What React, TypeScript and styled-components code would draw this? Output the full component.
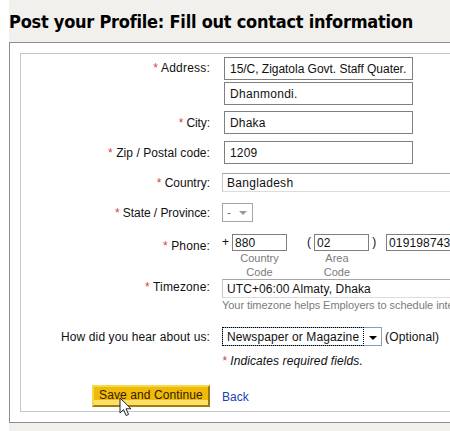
import React from "react";
import styled, { createGlobalStyle } from "styled-components";

const GlobalStyle = createGlobalStyle`
  * { box-sizing: border-box; }
  html, body { margin: 0; padding: 0; height: 100%; overflow: hidden; background: #fff; }
  body { font: 12px/16px "Liberation Sans", Arial, sans-serif; color: #111; }
`;

const Page = styled.main`
  width: 441px;
  height: 431px;
  margin-left: 9px;
  overflow: hidden;
  background: #f1f0ec;
`;

const Title = styled.h1`
  height: 42px;
  margin: 0;
  padding: 8px 0 0 0;
  font: bold 18px/28px "DejaVu Sans Condensed", Tahoma, sans-serif;
  letter-spacing: -0.24px;
  white-space: nowrap;
  color: #000;
`;

const Panel = styled.section`
  width: 600px;
  height: 381px;
  padding: 10px;
  border: 1px solid #8f8d8b;
  background: #fff;
`;

const Form = styled.form`
  height: 359px;
  border: 1px solid #c6c6c6;
`;

const Row = styled.div<{ $h: number }>`
  display: flex;
  height: ${(p) => p.$h}px;
  white-space: nowrap;
`;

const Label = styled.label<{ $top: number; $ls?: number }>`
  width: 189px;
  margin-right: 12px;
  padding-top: ${(p) => p.$top}px;
  text-align: right;
  flex: none;
  letter-spacing: ${(p) => p.$ls ?? 0}px;
`;

const Star = styled.span`
  color: #d8414a;
`;

const Fields = styled.div<{ $top: number; $left?: number }>`
  display: flex;
  flex-direction: column;
  gap: 2px;
  padding-top: ${(p) => p.$top}px;
  padding-left: ${(p) => p.$left ?? 0}px;
`;

const TextBox = styled.div<{ $ls?: number }>`
  width: 189px;
  height: 23px;
  padding: 4px 0 0 5px;
  border: 1px solid #7f7f7f;
  line-height: 15px;
  letter-spacing: ${(p) => p.$ls ?? 0}px;
`;

const Select = styled.div<{ $w: number; $muted?: boolean; $ls?: number }>`
  display: flex;
  align-items: center;
  justify-content: space-between;
  width: ${(p) => p.$w}px;
  height: 19px;
  padding: 0 5px 0 4px;
  border: 1px solid ${(p) => (p.$muted ? "#a5a5a5" : "#c4c4c4")};
  border-top-color: #a5a5a5;
  border-bottom-color: ${(p) => (p.$muted ? "#a5a5a5" : "#dcdcdc")};
  color: ${(p) => (p.$muted ? "#777" : "#111")};
  letter-spacing: ${(p) => p.$ls ?? 0}px;
`;

const Line = styled.div`
  display: flex;
`;

const PhoneGroup = styled.div<{ $w: number }>`
  display: flex;
  width: ${(p) => p.$w}px;
`;

const Mark = styled.span<{ $w: number }>`
  width: ${(p) => p.$w}px;
  flex: none;
`;

const PhoneCell = styled.div`
  flex: none;
`;

const PhoneBox = styled.div<{ $w: number; $ls?: number }>`
  width: ${(p) => p.$w}px;
  height: 17px;
  padding-left: 2px;
  border: 1px solid #7f7f7f;
  line-height: 16px;
  letter-spacing: ${(p) => p.$ls ?? 0}px;
`;

const Hint = styled.div`
  font-size: 11px;
  line-height: 14px;
  color: #7b7b7b;
  text-align: center;
`;

const TimeHint = styled.div`
  margin-top: -2px;
  font-size: 11px;
  line-height: 14px;
  color: #7b7b7b;
  letter-spacing: -0.06px;
`;

const FocusedSelect = styled.div`
  display: flex;
  width: 160px;
  height: 19px;
  border: 1px solid #7da2ba;
  margin-right: 3px;
`;

const FocusedValue = styled.div`
  width: 142px;
  height: 19px;
  margin: -1px 0 0 -1px;
  padding-left: 4px;
  border: 1px dotted #000;
  line-height: 18px;
  letter-spacing: 0.1px;
`;

const Arrow = styled.span<{ $color: string; $half: number }>`
  align-self: center;
  border: ${(p) => p.$half}px solid transparent;
  border-top-color: ${(p) => p.$color};
  border-bottom: 0;
`;

const FocusArrow = styled(Arrow)`
  margin-left: 5px;
  margin-top: 3px;
`;

const Optional = styled.span`
  padding-top: 2px;
  letter-spacing: 0.15px;
`;

const Required = styled.div`
  padding-top: 1px;
  font-style: italic;
  letter-spacing: 0.1px;
`;

const Save = styled.button`
  position: relative;
  width: 118px;
  height: 22px;
  margin-left: 71px;
  padding: 0 0 1px;
  border: 2px solid;
  border-color: #f6d84c #98780f #a27b08 #f8d745;
  background: linear-gradient(#efbb08 0 70%, #ffdf67 70%) padding-box;
  font: 12px/17px "Liberation Sans", Arial, sans-serif;
  letter-spacing: 0.1px;
  color: #321a05;
  white-space: nowrap;
`;

const Pointer = styled.svg`
  position: absolute;
  left: 25px;
  top: 10px;
  overflow: visible;
`;

const Back = styled.a`
  margin: 4px 0 0 12px;
  color: #233fb5;
`;

const Req = () => <Star>* </Star>;

export default function App() {
  return (
    <>
      <GlobalStyle />
      <Page>
        <Title>Post your Profile: Fill out contact information</Title>
        <Panel>
          <Form>
            <Row $h={54}>
              <Label $top={6} $ls={0.2}><Req />Address:</Label>
              <Fields $top={3} $left={2}>
                <TextBox $ls={-0.03}>15/C, Zigatola Govt. Staff Quater.</TextBox>
                <TextBox $ls={0.3}>Dhanmondi.</TextBox>
              </Fields>
            </Row>
            <Row $h={30}>
              <Label $top={7} $ls={-0.1}><Req />City:</Label>
              <Fields $top={3} $left={2}><TextBox $ls={0.2}>Dhaka</TextBox></Fields>
            </Row>
            <Row $h={30}>
              <Label $top={7} $ls={0.06}><Req />Zip / Postal code:</Label>
              <Fields $top={3} $left={2}><TextBox $ls={0.2}>1209</TextBox></Fields>
            </Row>
            <Row $h={30}>
              <Label $top={7}><Req />Country:</Label>
              <Fields $top={5}><Select $w={300} $ls={0.3}>Bangladesh</Select></Fields>
            </Row>
            <Row $h={30}>
              <Label $top={7} $ls={-0.05}><Req />State / Province:</Label>
              <Fields $top={5}>
                <Select $w={31} $muted>-<Arrow $color="#999" $half={4} /></Select>
              </Fields>
            </Row>
            <Row $h={51}>
              <Label $top={10} $ls={0.12}><Req />Phone:</Label>
              <Fields $top={6}>
                <Line>
                  <PhoneGroup $w={85}>
                    <Mark $w={10}>+</Mark>
                    <PhoneCell>
                      <PhoneBox $w={55} $ls={0.1}>880</PhoneBox>
                      <Hint>Country<br />Code</Hint>
                    </PhoneCell>
                  </PhoneGroup>
                  <PhoneGroup $w={79}>
                    <Mark $w={7}>(</Mark>
                    <PhoneCell>
                      <PhoneBox $w={55} $ls={0.1}>02</PhoneBox>
                      <Hint>Area&nbsp;&nbsp;&nbsp;<br />Code&nbsp;&nbsp;&nbsp;</Hint>
                    </PhoneCell>
                    <Mark $w={17}>&nbsp;)</Mark>
                  </PhoneGroup>
                  <PhoneBox $w={120} $ls={0.15}>019198743</PhoneBox>
                </Line>
              </Fields>
            </Row>
            <Row $h={43}>
              <Label $top={0} $ls={0.15}><Req />Timezone:</Label>
              <Fields $top={0}>
                <Select $w={300} $ls={0.1}>UTC+06:00 Almaty, Dhaka</Select>
                <TimeHint>Your timezone helps Employers to schedule inte</TimeHint>
              </Fields>
            </Row>
            <Row $h={30}>
              <Label $top={7} $ls={0.11}>How did you hear about us:</Label>
              <Fields $top={5}>
                <Line>
                  <FocusedSelect>
                    <FocusedValue>Newspaper or Magazine</FocusedValue>
                    <FocusArrow $color="#000" $half={4} />
                  </FocusedSelect>
                  <Optional>(Optional)</Optional>
                </Line>
              </Fields>
            </Row>
            <Row $h={33}>
              <Label $top={0} />
              <Required><Req />Indicates required fields.</Required>
            </Row>
            <Row $h={26}>
              <Save type="button">
                Save and Continue
                <Pointer width="13" height="20" viewBox="0 0 13 20">
                  <path d="M1 1v15l3.5-3.4 2.6 5.9 2.5-1.1L7 11.8h5z" fill="#fff" stroke="#222236" />
                </Pointer>
              </Save>
              <Back>Back</Back>
            </Row>
          </Form>
        </Panel>
      </Page>
    </>
  );
}
